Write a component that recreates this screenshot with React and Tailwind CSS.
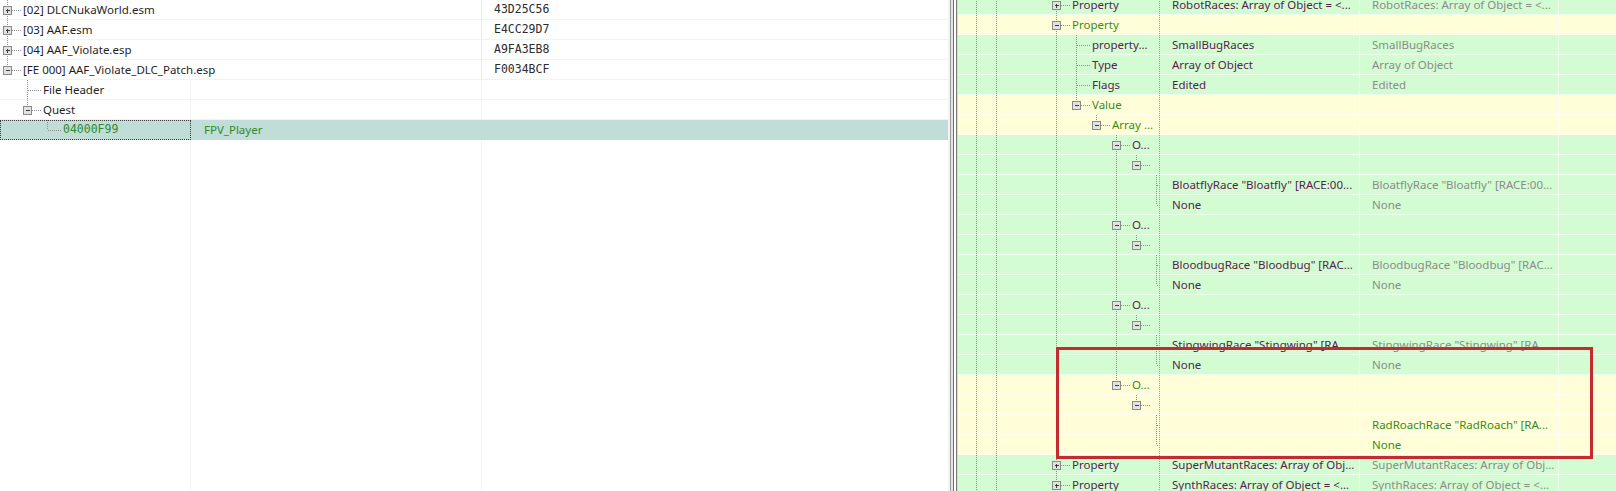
import React from 'react';

// dotted tree guides, drawn per row like a VirtualTreeView
const DOT = '#8f8f8f';

function Guide({ kind, own }) {
  const w = own ? 26 : 20;
  const full = kind === '|' || kind[0] === 'T';
  const half = kind[0] === 'L';
  const branch = kind[0] === 'T' || kind[0] === 'L';
  const box = kind[1];
  return (
    <svg width={w} height={20} className="block shrink-0" shapeRendering="crispEdges">
      {full && <line x1="10.5" y1="0" x2="10.5" y2="20" stroke={DOT} strokeDasharray="1 1" />}
      {half && <line x1="10.5" y1="0" x2="10.5" y2="10" stroke={DOT} strokeDasharray="1 1" />}
      {branch && (
        <line x1={box ? 15 : 11} y1="10.5" x2="24" y2="10.5" stroke={DOT} strokeDasharray="1 1" />
      )}
      {box && (
        <g>
          <rect x="6.5" y="6.5" width="8" height="8" fill="#e2e2e2" stroke="#8a8a8a" />
          <line x1="8.5" y1="10.5" x2="13" y2="10.5" stroke="#3a3a3a" />
          {box === '+' && <line x1="10.5" y1="8.5" x2="10.5" y2="13" stroke="#3a3a3a" />}
        </g>
      )}
    </svg>
  );
}

function Guides({ g }) {
  return (
    <>
      {g.map((k, i) => (
        <Guide key={i} kind={k} own={i === g.length - 1} />
      ))}
    </>
  );
}

const tone = {
  p: 'text-[#561d4e]',
  g: 'text-[#3b8a17]',
  s: 'text-[#8b8b8b]',
  k: 'text-[#1f1f1f]',
};

const files = [
  { g: ['T+'], name: '[02] DLCNukaWorld.esm', crc: '43D25C56' },
  { g: ['T+'], name: '[03] AAF.esm', crc: 'E4CC29D7' },
  { g: ['T+'], name: '[04] AAF_Violate.esp', crc: 'A9FA3EB8' },
  { g: ['L-'], name: '[FE 000] AAF_Violate_DLC_Patch.esp', crc: 'F0034BCF' },
];

const base = ['|', '|', ' ', ' '];
const objRow = ['|', '|', ' ', ' ', '|', ' ', ' '];

function raceGroup(race, last) {
  const bg = last ? 'y' : 'g';
  const rest = last ? ' ' : '|';
  const c = last ? 'g' : 'p';
  return [
    { g: [...objRow, last ? 'L-' : 'T-'], bg, label: 'O...', lc: c },
    { g: [...objRow, rest, 'L-'], bg },
    last
      ? { g: [...objRow, rest, ' ', 'T'], bg, c3: race, c3c: 'g' }
      : { g: [...objRow, rest, ' ', 'T'], bg, c2: race, c3: race },
    last
      ? { g: [...objRow, rest, ' ', 'L'], bg, c3: 'None', c3c: 'g' }
      : { g: [...objRow, rest, ' ', 'L'], bg, c2: 'None', c3: 'None' },
  ];
}

const rows = [
  { g: [...base, 'T+'], bg: 'g', label: 'Property', lc: 'p', c2: 'RobotRaces: Array of Object = <...', c3: 'RobotRaces: Array of Object = <...' },
  { g: [...base, 'T-'], bg: 'y', label: 'Property', lc: 'g' },
  { g: [...base, '|', 'T'], bg: 'g', label: 'property...', lc: 'p', c2: 'SmallBugRaces', c3: 'SmallBugRaces' },
  { g: [...base, '|', 'T'], bg: 'g', label: 'Type', lc: 'p', c2: 'Array of Object', c3: 'Array of Object' },
  { g: [...base, '|', 'T'], bg: 'g', label: 'Flags', lc: 'p', c2: 'Edited', c3: 'Edited' },
  { g: [...base, '|', 'L-'], bg: 'y', label: 'Value', lc: 'g' },
  { g: [...base, '|', ' ', 'L-'], bg: 'y', label: 'Array ...', lc: 'g' },
  ...raceGroup('BloatflyRace "Bloatfly" [RACE:00...'),
  ...raceGroup('BloodbugRace "Bloodbug" [RAC...'),
  ...raceGroup('StingwingRace "Stingwing" [RA...'),
  ...raceGroup('RadRoachRace "RadRoach" [RA...', true),
  { g: [...base, 'T+'], bg: 'g', label: 'Property', lc: 'p', c2: 'SuperMutantRaces: Array of Obj...', c3: 'SuperMutantRaces: Array of Obj...' },
  { g: [...base, 'T+'], bg: 'g', label: 'Property', lc: 'p', c2: 'SynthRaces: Array of Object = <...', c3: 'SynthRaces: Array of Object = <...' },
];

function FilePane() {
  return (
    <div className="w-[948px] shrink-0 flex flex-col bg-white text-[#1f1f1f]">
      {files.map((f) => (
        <div key={f.crc} className="flex h-5 shrink-0 border-b border-[#f2f2f2]">
          <div className="w-[482px] shrink-0 flex items-center border-r border-[#ececec]">
            <div className="-ml-[3px] flex">
              <Guides g={f.g} />
            </div>
            <span className="whitespace-nowrap">{f.name}</span>
          </div>
          <div className="flex-1 flex items-center pl-3 font-['DejaVu_Sans_Mono',monospace] text-[11.5px] text-[#2c2c2c]">
            {f.crc}
          </div>
        </div>
      ))}

      <div className="flex h-5 shrink-0 border-b border-[#f2f2f2]">
        <div className="w-[191px] shrink-0 flex items-center border-r border-[#f4f4f4]">
          <div className="-ml-[3px] flex">
            <Guide kind=" " />
            <Guide kind="T" own />
          </div>
          <span>File Header</span>
        </div>
        <div className="w-[291px] shrink-0 border-r border-[#f4f4f4]" />
        <div className="flex-1" />
      </div>

      <div className="flex h-5 shrink-0 border-b border-[#f2f2f2]">
        <div className="w-[191px] shrink-0 flex items-center border-r border-[#f4f4f4]">
          <div className="-ml-[3px] flex">
            <Guide kind=" " />
            <Guide kind="L-" own />
          </div>
          <span>Quest</span>
        </div>
        <div className="w-[291px] shrink-0 border-r border-[#f4f4f4]" />
        <div className="flex-1" />
      </div>

      {/* focused record */}
      <div className="flex h-5 shrink-0 bg-[#c1ddd8] text-[#2f8a2c]">
        <div className="w-[191px] shrink-0 flex items-center border border-dotted border-[#3a3a3a]">
          <div className="-ml-[4px] flex">
            <Guide kind=" " />
            <Guide kind=" " />
            <Guide kind="L" own />
          </div>
          <span className="font-['DejaVu_Sans_Mono',monospace] text-[11.5px]">04000F99</span>
        </div>
        <div className="w-[291px] shrink-0 flex items-center pl-[13px]">FPV_Player</div>
        <div className="flex-1" />
      </div>

      <div className="flex flex-1">
        <div className="w-[191px] shrink-0 border-r border-[#f4f4f4]" />
        <div className="w-[291px] shrink-0 border-r border-[#f4f4f4]" />
        <div className="flex-1" />
      </div>
    </div>
  );
}

function Splitter() {
  return (
    <div className="w-[10px] shrink-0 flex">
      <div className="w-[2px] bg-[#f3f3f3]" />
      <div className="w-px bg-[#9c9c9c]" />
      <div className="w-[2px] bg-[#e4e4e4]" />
      <div className="w-px bg-[#6c6c6c]" />
      <div className="w-[2px] bg-white" />
      <div className="w-px bg-[#7a7a7a]" />
      <div className="w-px bg-[#dadada]" />
    </div>
  );
}

function RecordPane() {
  return (
    <div className="flex-1 overflow-hidden">
      <div className="-mt-[5px] flex flex-col">
        {rows.map((r, i) => (
          <div
            key={i}
            className={`flex h-5 shrink-0 border-b border-white/60 ${r.bg === 'y' ? 'bg-[#fffed8]' : 'bg-[#d3fcd3]'}`}
          >
            <div className="w-[202px] shrink-0 flex items-center pl-2 overflow-hidden border-r border-dotted border-[#9a9a9a]">
              <Guides g={r.g} />
              {r.label && <span className={`whitespace-nowrap ${tone[r.lc]}`}>{r.label}</span>}
            </div>
            <div className={`w-[200px] shrink-0 flex items-center pl-3 whitespace-nowrap overflow-hidden border-r border-white/70 ${tone.p}`}>
              {r.c2}
            </div>
            <div className={`w-[199px] shrink-0 flex items-center pl-3 whitespace-nowrap overflow-hidden border-r border-white/70 ${tone[r.c3c || 's']}`}>
              {r.c3}
            </div>
            <div className="flex-1" />
          </div>
        ))}
      </div>
    </div>
  );
}

export default function App() {
  return (
    <div className="relative w-[1616px] h-[491px] overflow-hidden flex bg-white font-['Noto_Sans',sans-serif] text-[11.5px] leading-none">
      <FilePane />
      <Splitter />
      <RecordPane />

      {/* highlight around the last race entry */}
      <div className="absolute left-[1056px] top-[347px] w-[537px] h-[112px] border-[3px] border-[#c42a2e]" />
    </div>
  );
}
